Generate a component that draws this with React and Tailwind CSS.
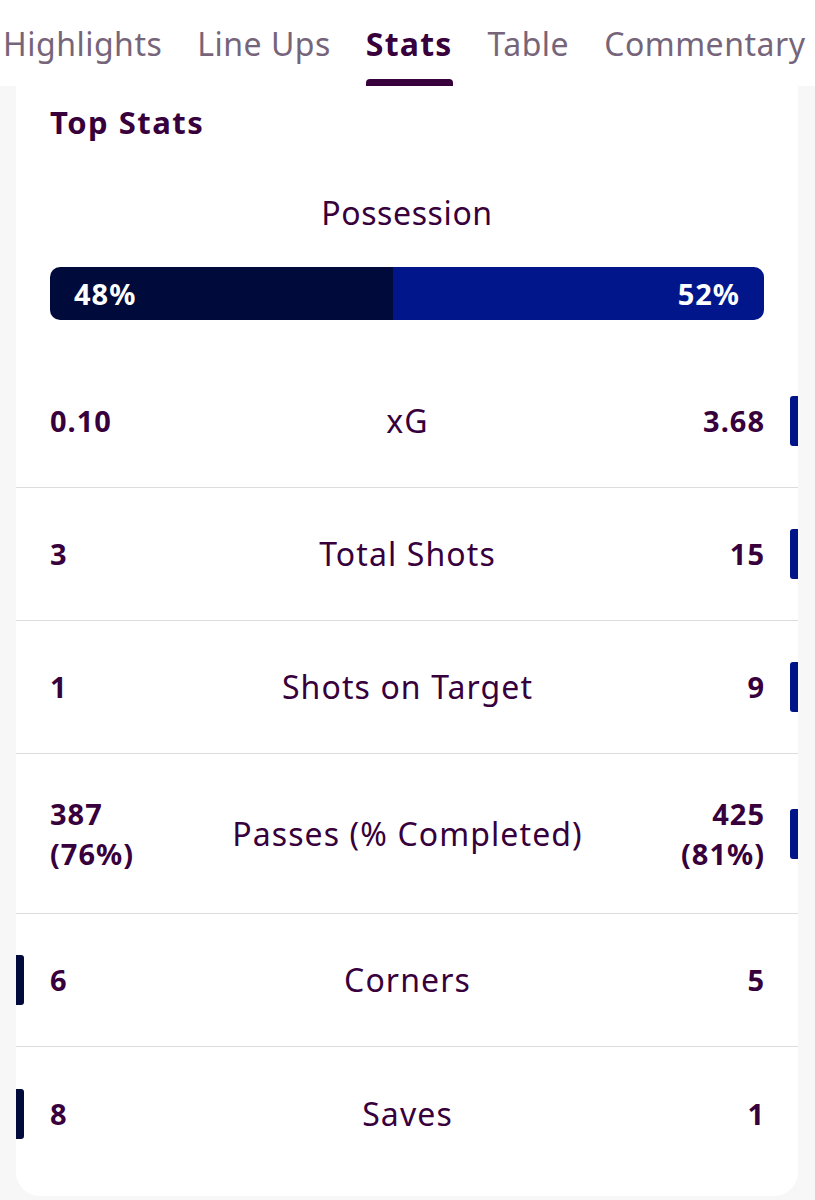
import React from "react";

const font = { fontFamily: '"Noto Sans", "Liberation Sans", sans-serif' };

const tabs = ["Highlights", "Line Ups", "Stats", "Table", "Commentary"];

const rows = [
  { l: ["0.10"], label: "xG", r: ["3.68"], win: "r" },
  { l: ["3"], label: "Total Shots", r: ["15"], win: "r" },
  { l: ["1"], label: "Shots on Target", r: ["9"], win: "r" },
  { l: ["387", "(76%)"], label: "Passes (% Completed)", r: ["425", "(81%)"], win: "r", tall: true },
  { l: ["6"], label: "Corners", r: ["5"], win: "l" },
  { l: ["8"], label: "Saves", r: ["1"], win: "l", last: true },
];

function Row({ row }) {
  return (
    <div
      className={
        "flex items-center " +
        (row.tall ? "h-[160px] " : "h-[133px] ") +
        (row.last ? "" : "border-b border-[#dcdcdc]")
      }
    >
      <div className="w-[8px] flex items-center">
        {row.win === "l" && <div className="w-[8px] h-[50px] rounded-r-[3px] bg-[#000b3b]" />}
      </div>
      <div className="flex-1 grid grid-cols-[1fr_auto_1fr] items-center px-[26px] pr-[25px]">
        <div className="text-[29px] font-bold leading-[40px] tracking-[1px] text-[#37003c] text-left">
          {row.l.map((t) => (
            <div key={t}>{t}</div>
          ))}
        </div>
        <div className="text-[32px] leading-[40px] tracking-[1.1px] text-[#37003c] text-center">{row.label}</div>
        <div className="text-[29px] font-bold leading-[40px] tracking-[1px] text-[#37003c] text-right">
          {row.r.map((t) => (
            <div key={t}>{t}</div>
          ))}
        </div>
      </div>
      <div className="w-[8px] flex items-center">
        {row.win === "r" && <div className="w-[8px] h-[50px] rounded-l-[3px] bg-[#00148a]" />}
      </div>
    </div>
  );
}

export default function App() {
  return (
    <div style={font} className="min-h-[1200px] bg-[#f7f7f8] w-[815px] overflow-hidden">
      <div className="bg-white h-[86px] flex items-end whitespace-nowrap pl-[3px] gap-[35px]">
        {tabs.map((t) => (
          <div key={t} className="flex flex-col items-center">
            <div
              className={
                "text-[32px] leading-[46px] " +
                (t === "Stats" ? "font-bold tracking-[1.2px] text-[#37003c]" : "tracking-[0.5px] text-[#76657a]")
              }
            >
              {t}
            </div>
            <div
              className={
                "mt-[12px] h-[7px] w-full rounded-t-[4px] " + (t === "Stats" ? "bg-[#37003c]" : "bg-transparent")
              }
            />
          </div>
        ))}
      </div>
      <div className="ml-[16px] w-[782px] bg-white rounded-b-[24px] pb-[16px]">
        <div className="px-[34px] pt-[18px] text-[31px] font-bold leading-[36px] tracking-[1.5px] text-[#37003c]">
          Top Stats
        </div>
        <div className="mt-[53px] text-center text-[32px] leading-[40px] tracking-[0.6px] text-[#37003c]">
          Possession
        </div>
        <div className="mx-[34px] mt-[34px] h-[53px] flex rounded-[10px] overflow-hidden text-white text-[29px] font-bold tracking-[1px]">
          <div className="w-[48%] bg-[#000a3b] flex items-center pl-[24px]">48%</div>
          <div className="flex-1 bg-[#00168a] flex items-center justify-end pr-[24px]">52%</div>
        </div>
        <div className="mt-[35px]">
          {rows.map((r) => (
            <Row key={r.label} row={r} />
          ))}
        </div>
      </div>
    </div>
  );
}
